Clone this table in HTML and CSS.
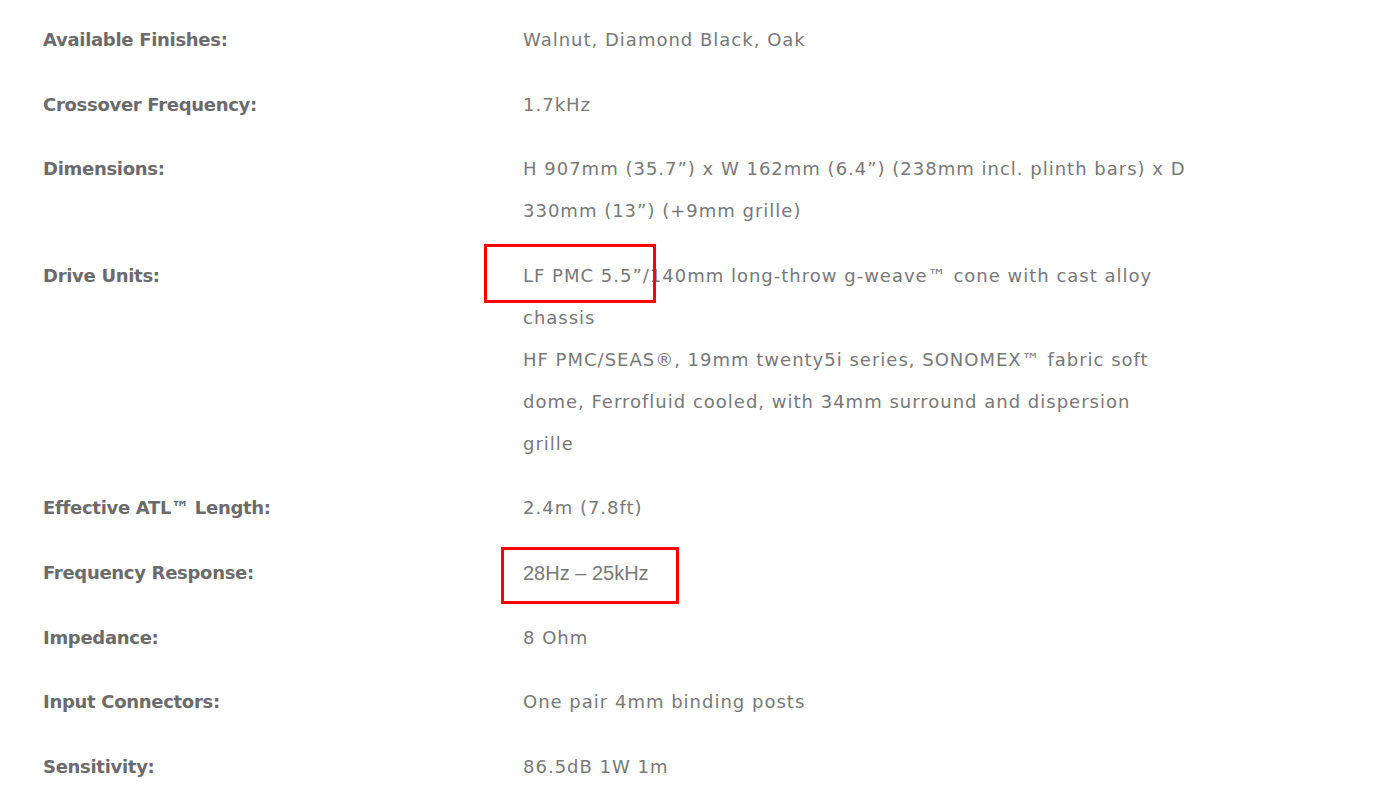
FILE: index.html
```html
<!DOCTYPE html>
<html>
<head>
<meta charset="utf-8">
<link rel="stylesheet" href="styles.css">
</head>
<body>
<div class="specs">
  <div class="row"><div class="label">Available Finishes:</div><div class="value">Walnut, Diamond Black, Oak</div></div>
  <div class="row"><div class="label">Crossover Frequency:</div><div class="value">1.7kHz</div></div>
  <div class="row"><div class="label">Dimensions:</div><div class="value">H 907mm (35.7”) x W 162mm (6.4”) (238mm incl. plinth bars) x D 330mm (13”) (+9mm grille)</div></div>
  <div class="row"><div class="label">Drive Units:</div><div class="value"><p>LF PMC 5.5”/140mm long-throw g-weave™ cone with cast alloy chassis</p><p>HF PMC/SEAS®, 19mm twenty5i series, SONOMEX™ fabric soft dome, Ferrofluid cooled, with 34mm surround and dispersion grille</p></div></div>
  <div class="row"><div class="label">Effective ATL™ Length:</div><div class="value">2.4m (7.8ft)</div></div>
  <div class="row"><div class="label">Frequency Response:</div><div class="value alt">28Hz – 25kHz</div></div>
  <div class="row"><div class="label">Impedance:</div><div class="value">8 Ohm</div></div>
  <div class="row"><div class="label">Input Connectors:</div><div class="value">One pair 4mm binding posts</div></div>
  <div class="row"><div class="label">Sensitivity:</div><div class="value">86.5dB 1W 1m</div></div>
</div>
<div class="mark mark-a"></div>
<div class="mark mark-b"></div>
</body>
</html>
```
FILE: styles.css
```css
html, body {
  margin: 0;
  padding: 0;
  background: #ffffff;
}
body {
  font-family: "DejaVu Sans", sans-serif;
  width: 1390px;
  height: 810px;
  overflow: hidden;
  position: relative;
}
.specs {
  padding: 19px 0 0 43px;
  display: flex;
  flex-direction: column;
  gap: 22.6px;
}
.row {
  display: grid;
  grid-template-columns: 480px 663px;
}
.label {
  font-weight: bold;
  font-size: 18px;
  line-height: 42px;
  color: #6b6b6b;
  letter-spacing: -0.3px;
}
.value {
  font-size: 18px;
  line-height: 42px;
  color: #787878;
  letter-spacing: 1px;
}
.value p {
  margin: 0;
}
.value.alt {
  font-family: "Liberation Sans", Arial, sans-serif;
  font-size: 20px;
  letter-spacing: 0;
}
.mark {
  position: absolute;
  border: 3px solid #ff0000;
  box-sizing: border-box;
}
.mark-a {
  left: 484px;
  top: 244px;
  width: 172px;
  height: 59px;
}
.mark-b {
  left: 501px;
  top: 547px;
  width: 178px;
  height: 57px;
}
```
